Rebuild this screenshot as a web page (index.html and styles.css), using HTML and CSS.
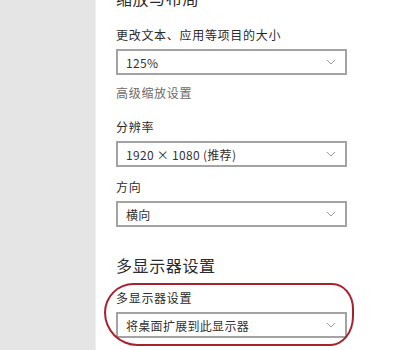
FILE: index.html
```html
<!DOCTYPE html>
<html lang="zh-CN">
<head>
<meta charset="utf-8">
<link rel="stylesheet" href="styles.css">
</head>
<body>
<div class="page">
  <aside class="sidebar"></aside>
  <main class="main">
    <h2 class="heading first">缩放与布局</h2>
    <div class="label">更改文本、应用等项目的大小</div>
    <div class="select"><span>125%</span><svg class="chev" viewBox="0 0 10 6" width="10" height="6"><path d="M1 1 L5 5 L9 1" fill="none" stroke="#9a9a9a" stroke-width="1"/></svg></div>
    <div class="link">高级缩放设置</div>
    <div class="label l2">分辨率</div>
    <div class="select"><span>1920 × 1080 (推荐)</span><svg class="chev" viewBox="0 0 10 6" width="10" height="6"><path d="M1 1 L5 5 L9 1" fill="none" stroke="#9a9a9a" stroke-width="1"/></svg></div>
    <div class="label l3">方向</div>
    <div class="select"><span>横向</span><svg class="chev" viewBox="0 0 10 6" width="10" height="6"><path d="M1 1 L5 5 L9 1" fill="none" stroke="#9a9a9a" stroke-width="1"/></svg></div>
    <h2 class="heading second">多显示器设置</h2>
    <div class="group">
      <div class="label">多显示器设置</div>
      <div class="select"><span>将桌面扩展到此显示器</span><svg class="chev" viewBox="0 0 10 6" width="10" height="6"><path d="M1 1 L5 5 L9 1" fill="none" stroke="#9a9a9a" stroke-width="1"/></svg></div>
      <div class="circle"></div>
    </div>
  </main>
</div>
</body>
</html>
```
FILE: styles.css
```css
html, body {
  margin: 0;
  padding: 0;
  background: #ffffff;
  overflow: hidden;
}
body {
  font-family: "Noto Sans CJK SC", "Noto Sans", sans-serif;
  color: #2b2b2b;
}
.page {
  display: flex;
  width: 399px;
  height: 350px;
  overflow: hidden;
}
.sidebar {
  width: 95px;
  flex: none;
  background: #e5e5e5;
  border-right: 1px solid #efefef;
}
.main {
  padding-left: 20px;
  width: 231px;
  display: flex;
  flex-direction: column;
}
.heading {
  margin: 0;
  font-size: 16px;
  font-weight: normal;
  line-height: 24px;
  height: 24px;
  letter-spacing: 0.6px;
  color: #2b2b2b;
  white-space: nowrap;
}
.heading.first {
  margin-top: -14px;
}
.heading.second {
  margin-top: 26px;
}
.label {
  font-size: 12px;
  line-height: 16px;
  height: 16px;
  letter-spacing: 0.7px;
  white-space: nowrap;
  margin-top: 17px;
}
.label.l2 {
  margin-top: 18px;
}
.label.l3 {
  margin-top: 12px;
}
.link {
  font-size: 12px;
  line-height: 16px;
  height: 16px;
  letter-spacing: 0.7px;
  color: #6a6a6a;
  margin-top: 10px;
  white-space: nowrap;
}
.select {
  margin-top: 6px;
  box-sizing: border-box;
  width: 231px;
  height: 26px;
  border: 2px solid #a3a3a3;
  display: flex;
  align-items: center;
  justify-content: space-between;
  padding: 0 9px 0 8px;
  font-size: 12px;
  letter-spacing: 0.3px;
  color: #333333;
  white-space: nowrap;
  background: #ffffff;
}
.chev {
  flex: none;
}
.group {
  position: relative;
}
.group .label {
  margin-top: 13px;
}
.circle {
  position: absolute;
  left: -12px;
  top: 6px;
  width: 250px;
  height: 63px;
  box-sizing: border-box;
  border: 2.5px solid #a9202e;
  border-radius: 30px 22px 24px 34px / 30px 26px 30px 34px;
  pointer-events: none;
}
```
